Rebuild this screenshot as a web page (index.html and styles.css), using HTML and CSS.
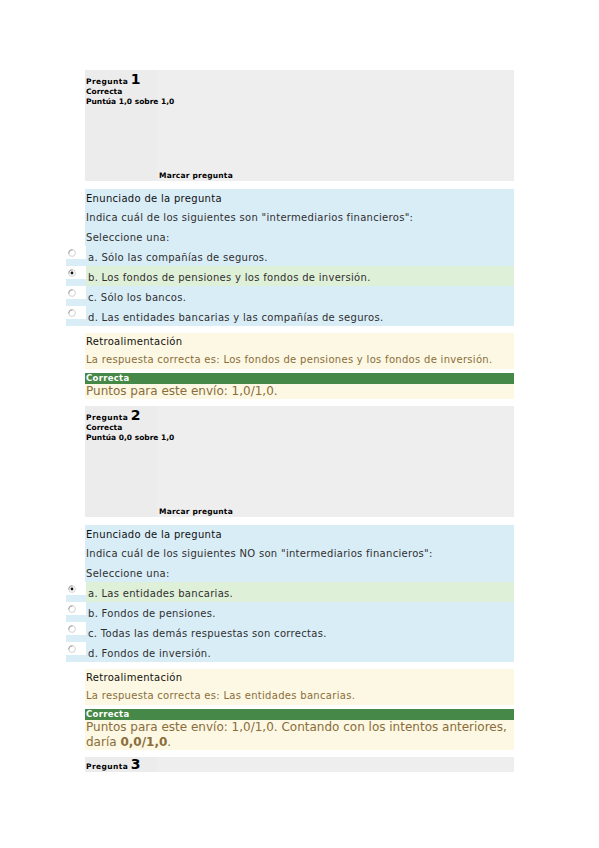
FILE: index.html
```html
<!DOCTYPE html>
<html lang="es">
<head>
<meta charset="utf-8">
<title>Preguntas</title>
<link rel="stylesheet" href="styles.css">
</head>
<body>
<div class="page">

  <div class="que">
    <div class="info">
      <div class="qno"><span class="lbl">Pregunta</span> <span class="num">1</span></div>
      <div class="state">Correcta</div>
      <div class="grade">Puntúa 1,0 sobre 1,0</div>
      <div class="flag">Marcar pregunta</div>
    </div>
    <div class="formulation">
      <div class="hd">Enunciado de la pregunta</div>
      <div class="qtext">Indica cuál de los siguientes son "intermediarios financieros":</div>
      <div class="prompt">Seleccione una:</div>
      <div class="answer">
        <div class="opt"><span class="rcell"><span class="rbox"><svg class="radio" viewBox="0 0 8 8"><circle cx="4" cy="4" r="3.4" fill="#fff" stroke="#c8c8c8" stroke-width="0.8"/><path d="M1 4.6A3.1 3.1 0 0 1 4.6 0.9" fill="none" stroke="#8c8c8c" stroke-width="0.8"/></svg></span></span><span class="ltext">a. Sólo las compañías de seguros.</span></div>
        <div class="opt sel"><span class="rcell"><span class="rbox"><svg class="radio" viewBox="0 0 8 8"><circle cx="4" cy="4" r="3.4" fill="#fff" stroke="#c8c8c8" stroke-width="0.8"/><path d="M1 4.6A3.1 3.1 0 0 1 4.6 0.9" fill="none" stroke="#8c8c8c" stroke-width="0.8"/><circle cx="4" cy="4" r="1.4" fill="#111"/></svg></span></span><span class="ltext">b. Los fondos de pensiones y los fondos de inversión.</span></div>
        <div class="opt"><span class="rcell"><span class="rbox"><svg class="radio" viewBox="0 0 8 8"><circle cx="4" cy="4" r="3.4" fill="#fff" stroke="#c8c8c8" stroke-width="0.8"/><path d="M1 4.6A3.1 3.1 0 0 1 4.6 0.9" fill="none" stroke="#8c8c8c" stroke-width="0.8"/></svg></span></span><span class="ltext">c. Sólo los bancos.</span></div>
        <div class="opt"><span class="rcell"><span class="rbox"><svg class="radio" viewBox="0 0 8 8"><circle cx="4" cy="4" r="3.4" fill="#fff" stroke="#c8c8c8" stroke-width="0.8"/><path d="M1 4.6A3.1 3.1 0 0 1 4.6 0.9" fill="none" stroke="#8c8c8c" stroke-width="0.8"/></svg></span></span><span class="ltext">d. Las entidades bancarias y las compañías de seguros.</span></div>
      </div>
    </div>
    <div class="feedback">
      <div class="hd">Retroalimentación</div>
      <div class="right">La respuesta correcta es: Los fondos de pensiones y los fondos de inversión.</div>
    </div>
    <div class="outcome">
      <div class="bar">Correcta</div>
      <div class="pts">Puntos para este envío: 1,0/1,0.</div>
    </div>
  </div>

  <div class="que">
    <div class="info">
      <div class="qno"><span class="lbl">Pregunta</span> <span class="num">2</span></div>
      <div class="state">Correcta</div>
      <div class="grade">Puntúa 0,0 sobre 1,0</div>
      <div class="flag">Marcar pregunta</div>
    </div>
    <div class="formulation">
      <div class="hd">Enunciado de la pregunta</div>
      <div class="qtext">Indica cuál de los siguientes NO son "intermediarios financieros":</div>
      <div class="prompt">Seleccione una:</div>
      <div class="answer">
        <div class="opt sel"><span class="rcell"><span class="rbox"><svg class="radio" viewBox="0 0 8 8"><circle cx="4" cy="4" r="3.4" fill="#fff" stroke="#c8c8c8" stroke-width="0.8"/><path d="M1 4.6A3.1 3.1 0 0 1 4.6 0.9" fill="none" stroke="#8c8c8c" stroke-width="0.8"/><circle cx="4" cy="4" r="1.4" fill="#111"/></svg></span></span><span class="ltext">a. Las entidades bancarias.</span></div>
        <div class="opt"><span class="rcell"><span class="rbox"><svg class="radio" viewBox="0 0 8 8"><circle cx="4" cy="4" r="3.4" fill="#fff" stroke="#c8c8c8" stroke-width="0.8"/><path d="M1 4.6A3.1 3.1 0 0 1 4.6 0.9" fill="none" stroke="#8c8c8c" stroke-width="0.8"/></svg></span></span><span class="ltext">b. Fondos de pensiones.</span></div>
        <div class="opt"><span class="rcell"><span class="rbox"><svg class="radio" viewBox="0 0 8 8"><circle cx="4" cy="4" r="3.4" fill="#fff" stroke="#c8c8c8" stroke-width="0.8"/><path d="M1 4.6A3.1 3.1 0 0 1 4.6 0.9" fill="none" stroke="#8c8c8c" stroke-width="0.8"/></svg></span></span><span class="ltext">c. Todas las demás respuestas son correctas.</span></div>
        <div class="opt"><span class="rcell"><span class="rbox"><svg class="radio" viewBox="0 0 8 8"><circle cx="4" cy="4" r="3.4" fill="#fff" stroke="#c8c8c8" stroke-width="0.8"/><path d="M1 4.6A3.1 3.1 0 0 1 4.6 0.9" fill="none" stroke="#8c8c8c" stroke-width="0.8"/></svg></span></span><span class="ltext">d. Fondos de inversión.</span></div>
      </div>
    </div>
    <div class="feedback">
      <div class="hd">Retroalimentación</div>
      <div class="right">La respuesta correcta es: Las entidades bancarias.</div>
    </div>
    <div class="outcome">
      <div class="bar">Correcta</div>
      <div class="pts two">Puntos para este envío: 1,0/1,0. Contando con los intentos anteriores, daría <b>0,0/1,0</b>.</div>
    </div>
  </div>

  <div class="que">
    <div class="info short">
      <div class="qno"><span class="lbl">Pregunta</span> <span class="num">3</span></div>
    </div>
  </div>

</div>
</body>
</html>
```

FILE: styles.css
```css
html, body {
  margin: 0;
  padding: 0;
  background: #fff;
}
body {
  font-family: "DejaVu Sans", sans-serif;
  color: #333;
}
.page {
  width: 429px;
  margin-left: 85px;
  padding-top: 70px;
}
.que {
  margin-bottom: 7px;
}
.info {
  height: 111px;
  box-sizing: border-box;
  padding: 2px 0 0 1px;
  background: linear-gradient(to right, #ececec 0, #ececec 72px, #eeeeee 72px);
  display: flex;
  flex-direction: column;
  color: #000;
  font-weight: bold;
  font-size: 7.5px;
  margin-bottom: 8px;
}
.info.short {
  height: 15px;
  padding-top: 0;
}
.qno {
  line-height: 15px;
  height: 15px;
}
.qno .lbl {
  font-size: 7.5px;
  letter-spacing: 0.4px;
}
.qno .num {
  font-size: 14px;
  font-weight: bold;
}
.state, .grade {
  line-height: 10px;
}
.flag {
  margin-top: auto;
  margin-left: 73px;
  line-height: 10px;
  letter-spacing: 0.2px;
}
.formulation {
  background: #d9edf7;
  font-size: 10px;
  letter-spacing: 0.3px;
  color: #2f2f2f;
  padding-left: 1px;
  margin-bottom: 7px;
}
.formulation .hd {
  line-height: 19px;
  color: #111;
}
.qtext {
  line-height: 20px;
}
.prompt {
  line-height: 16px;
  padding-top: 2px;
}
.answer {
  margin-left: -20px;
}
.opt {
  display: flex;
  height: 20px;
}
.rcell {
  width: 20px;
  flex: none;
  background: #d9edf7;
}
.rbox {
  display: flex;
  align-items: center;
  justify-content: flex-start;
  height: 13px;
  background: #fff;
  padding-left: 2px;
}
.radio {
  width: 8px;
  height: 8px;
}
.ltext {
  flex: 1;
  padding-left: 2px;
  padding-top: 4px;
  line-height: 16px;
}
.opt.sel .ltext {
  background: #dff0d8;
}
.feedback {
  background: #fcf8e3;
  font-size: 10px;
  letter-spacing: 0.3px;
  padding-left: 1px;
  margin-bottom: 4px;
}
.feedback .hd {
  line-height: 18px;
  color: #111;
}
.feedback .right {
  line-height: 18px;
  color: #8a6d3b;
}
.outcome {
  background: #fcf8e3;
}
.bar {
  background: #468847;
  color: #fff;
  font-weight: bold;
  font-size: 8.5px;
  letter-spacing: 0.3px;
  line-height: 11px;
  padding-left: 1px;
}
.pts {
  color: #8a6d3b;
  font-size: 12px;
  line-height: 15px;
  padding-left: 1px;
}
.pts.two {
  line-height: 15px;
}
.pts b {
  font-weight: bold;
}
```
